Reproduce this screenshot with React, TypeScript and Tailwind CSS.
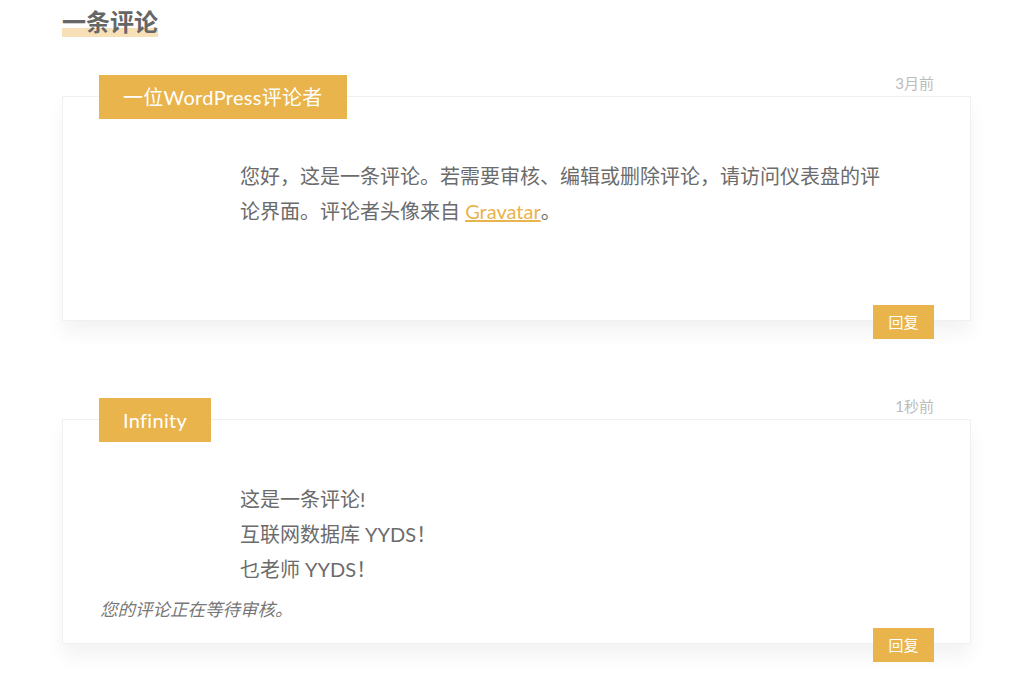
import React from 'react';

const font = "font-['Lato','Noto_Sans_CJK_SC',sans-serif]";

const Comment: React.FC<{
  author: string;
  time: string;
  mt: string;
  children: React.ReactNode;
  note?: string;
}> = ({ author, time, mt, children, note }) => (
  <div className={mt}>
    <div className="flex items-start justify-between pl-[37px] pr-[37px]">
      <div className="relative z-10 h-[44px] bg-[#e9b44c] px-[24px] text-[20px] leading-[44px] tracking-[0.3px] text-white">
        {author}
      </div>
      <div className="text-[15px] leading-[16px] text-[#bbbbbb]">{time}</div>
    </div>
    <div className="-mt-[23px] flex min-h-[225px] flex-col border border-[#f0f0f0] bg-white shadow-[0_12px_18px_rgba(0,0,0,0.05)]">
      <div className="pl-[177px] pr-[85px] pt-[62px] text-[20px] leading-[35px] text-[#6b6b6b]">
        {children}
      </div>
      {note && (
        <div className="mt-[9px] pl-[37px] text-[17.5px] italic leading-[28px] text-[#777]">{note}</div>
      )}
      <div className="-mb-[19px] mt-auto flex justify-end pr-[36px] pt-[2px]">
        <button className="h-[34px] w-[61px] bg-[#e9b44c] text-[15px] leading-[34px] text-white">回复</button>
      </div>
    </div>
  </div>
);

export default function App() {
  return (
    <div className={`${font} min-h-screen w-full bg-white`}>
      <div className="w-[971px] pl-[62px] pt-[7px]">
        <h2 className="inline-block text-[24px] font-bold leading-[30px] text-[#666] shadow-[inset_0_-9px_0_#f7e0b7]">
          一条评论
        </h2>
        <Comment author="一位WordPress评论者" time="3月前" mt="mt-[38px]">
          您好，这是一条评论。若需要审核、编辑或删除评论，请访问仪表盘的评论界面。评论者头像来自{' '}
          <a href="#" className="text-[#e9b44c] underline">Gravatar</a>。
        </Comment>
        <Comment author="Infinity" time="1秒前" mt="mt-[77px]" note="您的评论正在等待审核。">
          <p>这是一条评论!</p>
          <p>互联网数据库 YYDS！</p>
          <p>乜老师 YYDS！</p>
        </Comment>
      </div>
    </div>
  );
}
